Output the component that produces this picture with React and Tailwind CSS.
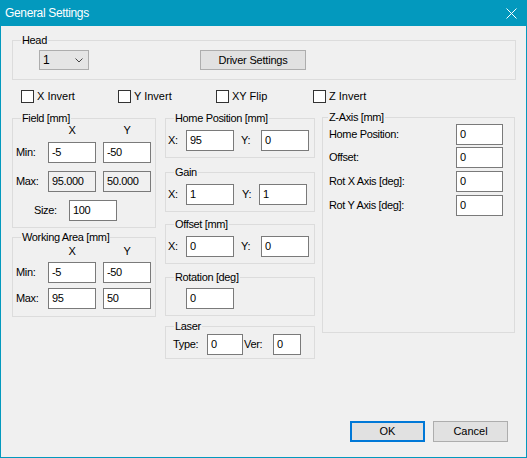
import clsx from 'clsx';

function Group({ label, className, labelLeft = 'left-[8px]', children }) {
  return (
    <div className={clsx('relative border border-[#dcdcdc]', className)}>
      <span className={clsx('absolute -top-[7px] bg-[#f0f0f0] px-px leading-[13px]', labelLeft)}>
        {label}
      </span>
      {children}
    </div>
  );
}

function Field({ value, className, readOnly }) {
  return (
    <div
      className={clsx(
        'flex h-[21px] shrink-0 items-center border border-[#7a7a7a] pl-[3px] leading-[13px]',
        readOnly ? 'bg-[#f0f0f0]' : 'bg-white',
        className
      )}
    >
      {value}
    </div>
  );
}

function Check({ label, className }) {
  return (
    <div className={clsx('flex items-center', className)}>
      <span className="h-[13px] w-[13px] border border-[#333333] bg-white" />
      <span className="ml-[3px] leading-[13px] tracking-normal">{label}</span>
    </div>
  );
}

function XYRow({ x, y, yLabel = 'w-[27px] pl-[7px]', yInput = 'w-[48px]' }) {
  return (
    <div className="mt-[11px] flex items-center">
      <span className="w-[20px] pl-[2px]">X:</span>
      <Field value={x} className="w-[48px]" />
      <span className={yLabel}>Y:</span>
      <Field value={y} className={yInput} />
    </div>
  );
}

function ZRow({ label, value, className }) {
  return (
    <div className={clsx('flex items-center', className)}>
      <span className="w-[133px] pl-[6px]">{label}</span>
      <Field value={value} className="h-[20px] w-[47px]" />
    </div>
  );
}

export default function App() {
  return (
    <div className="flex h-[458px] w-[527px] flex-col border-x border-b border-[#0399be] bg-[#f0f0f0] font-['Liberation_Sans',Arial,sans-serif] text-[11px] tracking-[-0.35px] text-black">
      {/* title bar */}
      <div className="flex h-[26px] shrink-0 items-center justify-between bg-[#0399be] pl-[4px] pr-[9px]">
        <span className="text-[12px] tracking-[-0.35px] text-white">General Settings</span>
        <svg width="11" height="11" viewBox="0 0 11 11" className="text-white">
          <path d="M0.5 0.5L10.5 10.5M10.5 0.5L0.5 10.5" stroke="currentColor" strokeWidth="1" />
        </svg>
      </div>

      <div className="flex flex-1 flex-col pl-[11px]">
        {/* Head */}
        <Group label="Head" className="mt-[14px] h-[40px] w-[504px]">
          <div className="flex items-start pl-[26px] pt-[9px]">
            <div className="flex h-[20px] w-[50px] items-center justify-between border border-[#adadad] bg-[#e5e5e5] pl-[3px] pr-[5px] text-[12px]">
              <span>1</span>
              <svg width="8" height="5" viewBox="0 0 8 5">
                <path d="M0.5 0.5L4 4L7.5 0.5" fill="none" stroke="#444" strokeWidth="1" />
              </svg>
            </div>
            <button className="ml-[111px] flex h-[20px] w-[106px] items-center justify-center border border-[#adadad] bg-[#e1e1e1] tracking-[-0.2px]">
              Driver Settings
            </button>
          </div>
        </Group>

        {/* checkboxes */}
        <div className="mt-[10px] flex h-[13px] items-center pl-[9px]">
          <Check label="X Invert" className="w-[97px]" />
          <Check label="Y Invert" className="w-[98px]" />
          <Check label="XY Flip" className="w-[97px]" />
          <Check label="Z Invert" />
        </div>

        <div className="mt-[15px] flex items-start">
          {/* left column */}
          <div className="flex w-[144px] flex-col">
            <Group label="Field [mm]" className="h-[110px]">
              <div className="ml-[35px] mt-[5px] flex leading-[13px]">
                <span className="w-[48px] text-center">X</span>
                <span className="ml-[7px] w-[48px] text-center">Y</span>
              </div>
              <div className="mt-[5px] flex items-center">
                <span className="w-[35px] pl-[3px]">Min:</span>
                <Field value="-5" className="w-[48px]" />
                <Field value="-50" className="ml-[7px] w-[48px]" />
              </div>
              <div className="mt-[8px] flex items-center">
                <span className="w-[35px] pl-[3px]">Max:</span>
                <Field value="95.000" className="w-[48px]" readOnly />
                <Field value="50.000" className="ml-[7px] w-[48px]" readOnly />
              </div>
              <div className="mt-[8px] flex items-center">
                <span className="w-[56px] pl-[21px]">Size:</span>
                <Field value="100" className="w-[48px]" />
              </div>
            </Group>

            <Group label="Working Area [mm]" className="mt-[9px] h-[80px]">
              <div className="ml-[35px] mt-[7px] flex leading-[13px]">
                <span className="w-[48px] text-center">X</span>
                <span className="ml-[7px] w-[48px] text-center">Y</span>
              </div>
              <div className="mt-[4px] flex items-center">
                <span className="w-[35px] pl-[3px]">Min:</span>
                <Field value="-5" className="w-[48px]" />
                <Field value="-50" className="ml-[7px] w-[48px]" />
              </div>
              <div className="mt-[5px] flex items-center">
                <span className="w-[35px] pl-[3px]">Max:</span>
                <Field value="95" className="w-[48px]" />
                <Field value="50" className="ml-[7px] w-[48px]" />
              </div>
            </Group>
          </div>

          {/* middle column */}
          <div className="ml-[9px] flex w-[150px] flex-col">
            <Group label="Home Position [mm]" className="h-[40px]">
              <XYRow x="95" y="0" />
            </Group>
            <Group label="Gain" className="mt-[14px] h-[40px]">
              <XYRow x="1" y="1" yLabel="w-[25px] pl-[8px]" />
            </Group>
            <Group label="Offset [mm]" className="mt-[12px] h-[40px]">
              <XYRow x="0" y="0" />
            </Group>
            <Group label="Rotation [deg]" className="mt-[13px] h-[39px]">
              <div className="mt-[10px] flex pl-[20px]">
                <Field value="0" className="w-[48px]" />
              </div>
            </Group>
            <Group label="Laser" className="mt-[10px] h-[33px]">
              <div className="mt-[7px] flex items-center">
                <span className="w-[41px] pl-[7px]">Type:</span>
                <Field value="0" className="w-[36px]" />
                <span className="w-[30px] pl-px">Ver:</span>
                <Field value="0" className="w-[28px]" />
              </div>
            </Group>
          </div>

          {/* right column */}
          <div className="ml-[7px] w-[193px]">
            <Group label="Z-Axis [mm]" labelLeft="left-[5px]" className="-mt-px h-[216px]">
              <ZRow label="Home Position:" value="0" className="mt-[6px]" />
              <ZRow label="Offset:" value="0" className="mt-[2px]" />
              <ZRow label="Rot X Axis [deg]:" value="0" className="mt-[3px]" />
              <ZRow label="Rot Y Axis [deg]:" value="0" className="mt-[3px]" />
            </Group>
          </div>
        </div>

        {/* buttons */}
        <div className="mt-auto flex justify-end gap-[8px] pb-[15px] pr-[18px]">
          <button className="flex h-[21px] w-[75px] items-center justify-center border-2 border-[#0078d7] bg-[#e1e1e1] tracking-normal">
            OK
          </button>
          <button className="flex h-[21px] w-[75px] items-center justify-center border border-[#adadad] bg-[#e1e1e1] tracking-normal">
            Cancel
          </button>
        </div>
      </div>
    </div>
  );
}
